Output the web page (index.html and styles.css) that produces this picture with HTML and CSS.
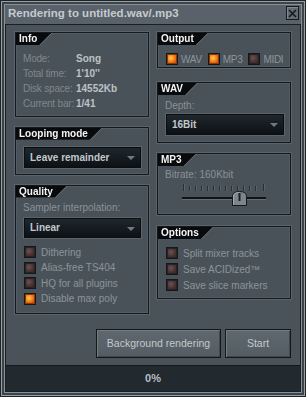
FILE: index.html
```html
<!DOCTYPE html>
<html lang="en">

<head>
    <meta charset="UTF-8">
    <title>Rendering to untitled.wav/.mp3</title>
    <link rel="stylesheet" href="styles.css">
</head>

<body>
    <div class="win">
        <div class="title">
            <span class="title_text">Rendering to untitled.wav/.mp3</span>
            <a href="javascript:;" class="close">
                <svg width="9" height="9" viewBox="0 0 9 9"><path d="M1 1L8 8M8 1L1 8" stroke="#15191c" stroke-width="1.6"/></svg>
            </a>
        </div>
        <div class="client">
            <div class="cols">
                <div class="col">
                    <div class="box info">
                        <div class="tab"><span>Info</span></div>
                        <div class="info_grid">
                            <span class="k">Mode:</span><span class="v">Song</span>
                            <span class="k">Total time:</span><span class="v">1'10''</span>
                            <span class="k">Disk space:</span><span class="v">14552Kb</span>
                            <span class="k">Current bar:</span><span class="v">1/41</span>
                        </div>
                    </div>
                    <div class="box looping">
                        <div class="tab"><span>Looping mode</span></div>
                        <div class="combo">Leave remainder<i class="arrow"></i></div>
                    </div>
                    <div class="box quality">
                        <div class="tab"><span>Quality</span></div>
                        <div class="lbl">Sampler interpolation:</div>
                        <div class="combo">Linear<i class="arrow"></i></div>
                        <ul class="checks">
                            <li><i class="cb"></i>Dithering</li>
                            <li><i class="cb"></i>Alias-free TS404</li>
                            <li><i class="cb"></i>HQ for all plugins</li>
                            <li><i class="cb on"></i>Disable max poly</li>
                        </ul>
                    </div>
                </div>
                <div class="col">
                    <div class="box output">
                        <div class="tab"><span>Output</span></div>
                        <div class="out_row">
                            <span class="opt"><i class="cb on"></i>WAV</span>
                            <span class="opt"><i class="cb on"></i>MP3</span>
                            <span class="opt"><i class="cb"></i>MIDI</span>
                        </div>
                    </div>
                    <div class="box wav">
                        <div class="tab"><span>WAV</span></div>
                        <div class="lbl">Depth:</div>
                        <div class="combo">16Bit<i class="arrow"></i></div>
                    </div>
                    <div class="box mp3">
                        <div class="tab"><span>MP3</span></div>
                        <div class="lbl">Bitrate: 160Kbit</div>
                        <svg class="slider" width="90" height="24" viewBox="0 0 90 24">
                            <g stroke="#2a3034" stroke-width="1">
                                <path d="M3.5 1V8M9.5 3V8M15.5 3V8M21.5 3V8M27.5 3V8M33.5 3V8M39.5 3V8M45.5 3V8M51.5 3V8M57.5 3V8M63.5 3V8M69.5 3V8M75.5 3V8M83.5 1V8"/>
                            </g>
                            <g stroke="#6a7379" stroke-width="1">
                                <path d="M4.5 1V8M10.5 3V8M16.5 3V8M22.5 3V8M28.5 3V8M34.5 3V8M40.5 3V8M46.5 3V8M52.5 3V8M58.5 3V8M64.5 3V8M70.5 3V8M76.5 3V8M84.5 1V8" opacity="0.5"/>
                            </g>
                            <rect x="2" y="14" width="84" height="2" fill="#101416"/>
                            <rect x="2" y="16" width="84" height="1" fill="#646d73"/>
                            <path d="M52.5 22.5V13.5Q52.5 8.5 59.5 8.5Q66.5 8.5 66.5 13.5V22.5Z" fill="#7d868c" stroke="#15191c"/>
                            <path d="M53.5 21.5V13.8Q53.5 9.5 59.5 9.5" fill="none" stroke="#a5adb2"/>
                            <rect x="58.5" y="10" width="2" height="8" fill="#1c2125"/>
                        </svg>
                    </div>
                    <div class="box options">
                        <div class="tab"><span>Options</span></div>
                        <ul class="checks">
                            <li><i class="cb"></i>Split mixer tracks</li>
                            <li><i class="cb"></i>Save ACIDized™</li>
                            <li><i class="cb"></i>Save slice markers</li>
                        </ul>
                    </div>
                </div>
            </div>
            <div class="actions">
                <a href="javascript:;" class="btn bg_btn">Background rendering</a>
                <a href="javascript:;" class="btn start_btn">Start</a>
            </div>
            <div class="progress">0%</div>
        </div>
    </div>
</body>

</html>
```

FILE: styles.css
```css
* {
    margin: 0;
    padding: 0;
    box-sizing: border-box;
}

body {
    background-color: #4b535a;
    font-family: "Liberation Sans", Arial, sans-serif;
    font-size: 10px;
}

.win {
    display: flex;
    flex-direction: column;
    width: 306px;
    height: 397px;
    padding: 0 4px 4px 4px;
    border: 1px solid #1e2327;
    background-color: #59626a;
    box-shadow: inset 0 0 0 1px #98a0a6, inset 0 0 0 3px #3c4349, inset 0 0 0 4px #8a9298;
}

.title {
    display: flex;
    align-items: center;
    justify-content: space-between;
    height: 23px;
    padding-left: 3px;
}

.title_text {
    font-size: 11.5px;
    font-weight: bold;
    color: #c5cacf;
}

.close {
    display: flex;
    align-items: center;
    justify-content: center;
    width: 13px;
    height: 14px;
    margin-right: 2px;
    margin-top: 1px;
    border: 1px solid #161a1d;
    background-color: #636c73;
    box-shadow: inset 1px 1px 0 #808990;
}

.client {
    display: flex;
    flex-direction: column;
    flex: 1;
    border: 1px solid #1a1f23;
    background-color: #4b535a;
}

.cols {
    display: flex;
    gap: 8px;
    height: 282px;
    margin-top: 7px;
    padding: 0 9px;
}

.col {
    display: flex;
    flex-direction: column;
    width: 134px;
}

.box {
    display: flex;
    flex-direction: column;
    border: 1px solid #15191c;
    box-shadow: 0 0 0 1px #5a636a, inset 0 0 0 1px #545c63;
    background-color: #4a5259;
}

.tab {
    align-self: flex-start;
    filter: drop-shadow(1px 0 0 #737c82);
}

.tab span {
    display: block;
    height: 12px;
    line-height: 12px;
    padding: 0 14px 0 3px;
    background-color: #080a0b;
    color: #f2f4f5;
    font-weight: bold;
    font-size: 10px;
    clip-path: polygon(0 0, 100% 0, calc(100% - 12px) 100%, 0 100%);
}

.lbl {
    height: 14px;
    line-height: 14px;
    padding-left: 7px;
    color: #899197;
}

.combo {
    position: relative;
    height: 21px;
    line-height: 19px;
    margin-left: 8px;
    padding-left: 5px;
    border: 1px solid #0b0e10;
    box-shadow: 0 0 0 1px #5b646a;
    background: linear-gradient(#1f272d, #0c1115);
    color: #c3c8cc;
    font-weight: bold;
}

.arrow {
    position: absolute;
    right: 5px;
    top: 8px;
    border-left: 4px solid transparent;
    border-right: 4px solid transparent;
    border-top: 4px solid #707a80;
}

.cb {
    display: block;
    flex: none;
    width: 12px;
    height: 12px;
    border: 1px solid #15181a;
    box-shadow: inset 0 0 0 1px #2c2222;
    background: radial-gradient(circle at 40% 40%, #6e5251 0, #4a3535 45%, #2e2020 100%);
}

.cb.on {
    box-shadow: inset 0 0 0 1px #8a3a08;
    background: radial-gradient(circle at 40% 40%, #ffd35a 0, #f98b1b 35%, #d8520b 70%, #9a3205 100%);
}

.checks {
    list-style: none;
}

.checks li {
    display: flex;
    align-items: center;
    gap: 5px;
    padding-left: 8px;
    color: #8c9499;
    white-space: nowrap;
}

/* info */
.info {
    height: 85px;
}

.info_grid {
    display: grid;
    grid-template-columns: 53px auto;
    grid-auto-rows: 15px;
    align-items: center;
    margin-top: 6px;
    padding-left: 7px;
    white-space: nowrap;
}

.info_grid .k {
    color: #7f878d;
    letter-spacing: -0.2px;
}

.info_grid .v {
    color: #bcc2c6;
    font-weight: bold;
}

.looping {
    height: 48px;
    margin-top: 10px;
}

.looping .combo {
    width: 117px;
    margin-top: 7px;
}

.quality {
    height: 130px;
    margin-top: 10px;
}

.quality .lbl {
    margin-top: 3px;
}

.quality .combo {
    width: 117px;
    height: 20px;
    line-height: 18px;
    margin-top: 3px;
}

.quality .checks {
    margin-top: 7px;
}

.quality .checks li {
    height: 15.5px;
}

/* right side */
.output {
    height: 36px;
}

.out_row {
    display: flex;
    gap: 6px;
    height: 12px;
    margin-top: 8px;
    padding-left: 8px;
    white-space: nowrap;
}

.opt {
    display: flex;
    align-items: center;
    gap: 3px;
    color: #8c9499;
    letter-spacing: -0.3px;
}

.wav {
    height: 61px;
    margin-top: 14px;
}

.wav .lbl {
    margin-top: 4px;
    padding-left: 7px;
}

.wav .combo {
    width: 118px;
    margin-top: 1px;
}

.mp3 {
    height: 62px;
    margin-top: 10px;
}

.mp3 .lbl {
    margin-top: 2px;
}

.slider {
    display: block;
    margin-top: 1px;
    margin-left: 22px;
}

.options {
    height: 73px;
    margin-top: 11px;
}

.options .checks {
    margin-top: 6px;
}

.options .checks li {
    height: 16px;
}

/* bottom */
.actions {
    display: flex;
    justify-content: flex-end;
    gap: 4px;
    margin-top: 15px;
    padding-right: 9px;
}

.btn {
    display: block;
    height: 29px;
    line-height: 27px;
    border: 1px solid #14181b;
    box-shadow: inset 1px 1px 0 #737c83, inset -1px -1px 0 #41484e;
    background: linear-gradient(#5f686f, #555d64);
    color: #c3c8cc;
    font-size: 10.5px;
    text-align: center;
    text-decoration: none;
}

.bg_btn {
    width: 125px;
}

.start_btn {
    width: 66px;
}

.progress {
    flex: 1;
    margin-top: 7px;
    border-top: 1px solid #15191c;
    background-color: #222a30;
    color: #b7bdc2;
    font-size: 11px;
    font-weight: bold;
    text-align: center;
    line-height: 25px;
}
```
